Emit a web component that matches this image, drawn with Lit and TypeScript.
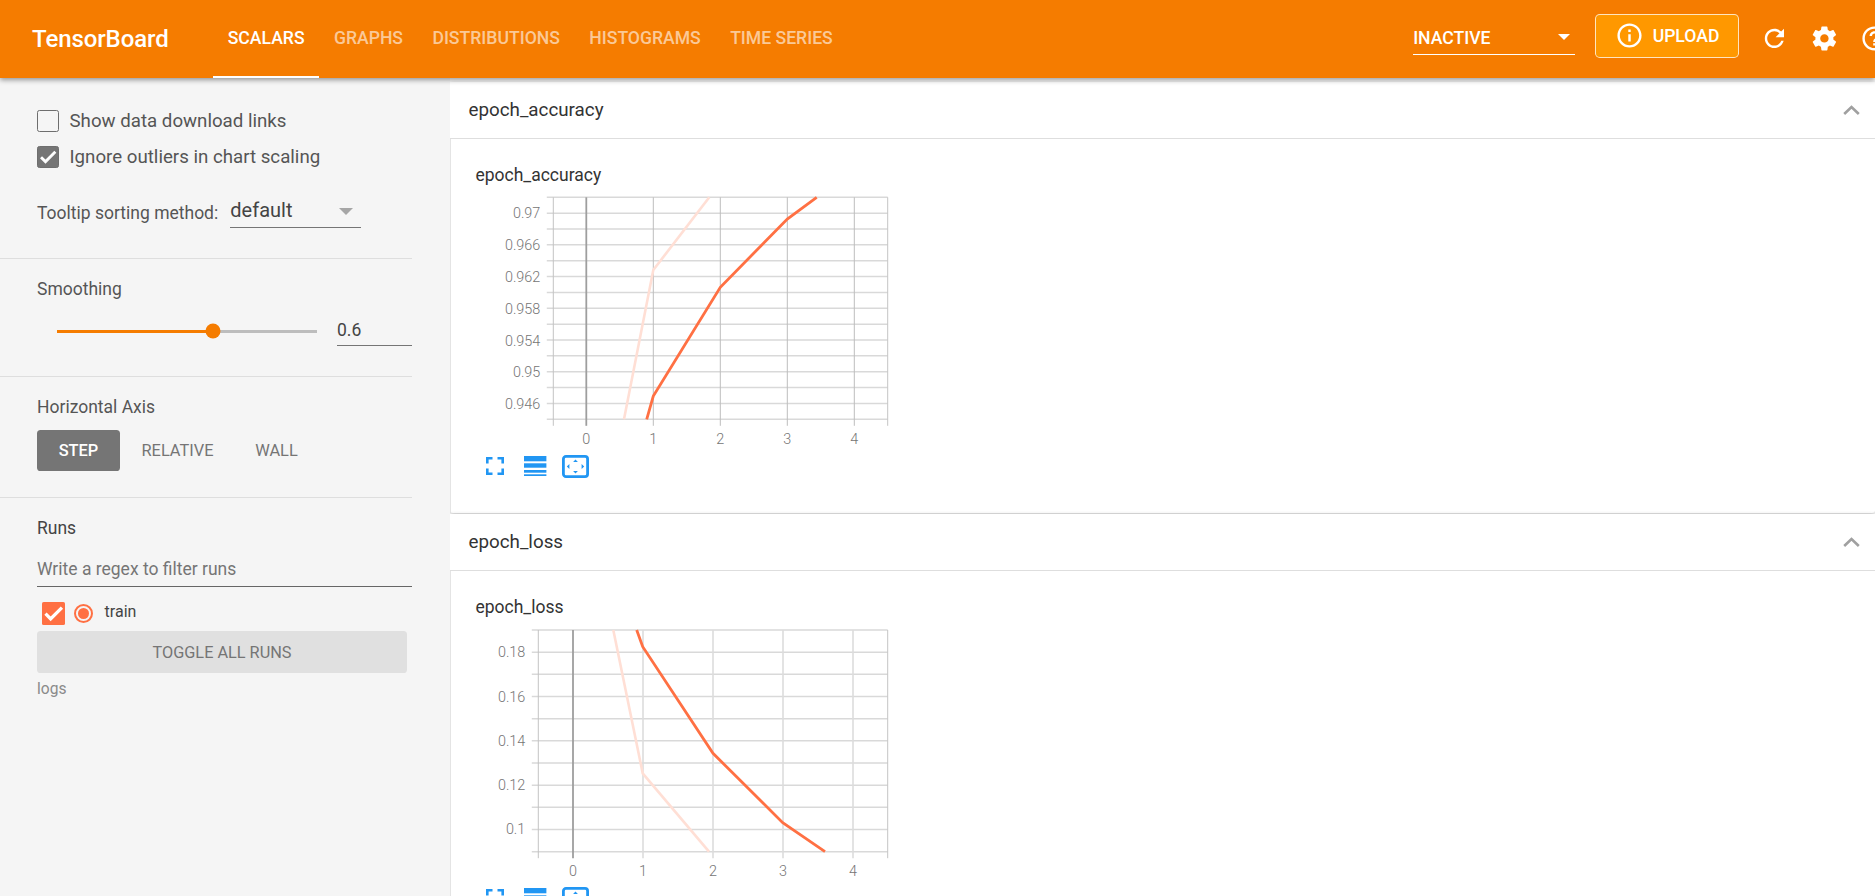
import { LitElement, html, css, svg } from "lit";
import { customElement, property } from "lit/decorators.js";

const PATHS = {
  refresh: "M17.65 6.35C16.2 4.9 14.21 4 12 4c-4.42 0-7.99 3.58-7.99 8s3.57 8 7.99 8c3.73 0 6.84-2.55 7.73-6h-2.08c-.82 2.33-3.04 4-5.65 4-3.31 0-6-2.69-6-6s2.69-6 6-6c1.66 0 3.14.69 4.22 1.78L13 11h7V4l-2.35 2.35z",
  settings: "M19.43 12.98c.04-.32.07-.64.07-.98s-.03-.66-.07-.98l2.11-1.65c.19-.15.24-.42.12-.64l-2-3.46c-.12-.22-.39-.3-.61-.22l-2.49 1c-.52-.4-1.08-.73-1.69-.98l-.38-2.65C14.46 2.18 14.25 2 14 2h-4c-.25 0-.46.18-.49.42l-.38 2.65c-.61.25-1.17.59-1.69.98l-2.49-1c-.23-.09-.49 0-.61.22l-2 3.46c-.13.22-.07.49.12.64l2.11 1.65c-.04.32-.07.65-.07.98s.03.66.07.98l-2.11 1.65c-.19.15-.24.42-.12.64l2 3.46c.12.22.39.3.61.22l2.49-1c.52.4 1.08.73 1.69.98l.38 2.65c.03.24.24.42.49.42h4c.25 0 .46-.18.49-.42l.38-2.65c.61-.25 1.17-.59 1.69-.98l2.49 1c.23.09.49 0 .61-.22l2-3.46c.12-.22.07-.49-.12-.64l-2.11-1.65zM12 15.5c-1.93 0-3.5-1.57-3.5-3.5s1.57-3.5 3.5-3.5 3.5 1.57 3.5 3.5-1.57 3.5-3.5 3.5z",
  help: "M11 18h2v-2h-2v2zm1-16C6.48 2 2 6.48 2 12s4.48 10 10 10 10-4.48 10-10S17.52 2 12 2zm0 18c-4.41 0-8-3.59-8-8s3.59-8 8-8 8 3.59 8 8-3.59 8-8 8zm0-14c-2.21 0-4 1.79-4 4h2c0-1.1.9-2 2-2s2 .9 2 2c0 2-3 1.75-3 5h2c0-2.25 3-2.5 3-5 0-2.21-1.79-4-4-4z",
  info: "M11 17h2v-6h-2v6zm1-15C6.48 2 2 6.48 2 12s4.48 10 10 10 10-4.48 10-10S17.52 2 12 2zm0 18c-4.41 0-8-3.59-8-8s3.59-8 8-8 8 3.59 8 8-3.59 8-8 8zM11 9h2V7h-2v2z",
  check: "M9 16.17L4.83 12l-1.41 1.41L9 19 21 7l-1.41-1.41z",
};

const icon = (name: keyof typeof PATHS, cls = "") =>
  html`<svg class=${cls} viewBox="0 0 24 24" fill="currentColor"><path d=${PATHS[name]}></path></svg>`;

interface ChartCfg {
  title: string;
  left: number; right: number; top: number; bottom: number;
  xZero: number; xStep: number;
  yLines: number[];
  yLabels: [string, number][];
  vColor: string; vWidth: number;
  dark: [number, number][];
  pale: [number, number][];
}

// Coordinates are local to the chart svg, whose origin lies at the chart title's left edge.
const ACCURACY: ChartCfg = {
  title: "epoch_accuracy",
  left: 77.3, right: 411.7, top: 7.3, bottom: 229.3,
  xZero: 110.3, xStep: 67,
  yLines: Array.from({ length: 15 }, (_, i) => 7.3 + i * (222 / 14)),
  yLabels: [["0.97", 22.7], ["0.966", 54.7], ["0.962", 86.7], ["0.958", 118.5], ["0.954", 150.5], ["0.95", 182.2], ["0.946", 214]],
  vColor: "#bdbdbd", vWidth: 1,
  dark: [[170.7, 229.3], [177.3, 206], [244.3, 97.3], [311.3, 29], [340.7, 7.3]],
  pale: [[148, 229.3], [177.3, 80], [233.3, 7.3]],
};
const LOSS: ChartCfg = {
  title: "epoch_loss",
  left: 62.3, right: 411.7, top: 8, bottom: 229.7,
  xZero: 97, xStep: 70,
  yLines: Array.from({ length: 11 }, (_, i) => 8 + i * 22.17),
  yLabels: [["0.18", 30], ["0.16", 74.6], ["0.14", 118.7], ["0.12", 163.3], ["0.1", 207.3]],
  vColor: "#dcdcdc", vWidth: 1.6,
  dark: [[160.7, 8], [166.7, 24.7], [237, 131.3], [306.7, 200.7], [349, 229.7]],
  pale: [[137.3, 8], [166.7, 151.3], [233, 229.7]],
};

@customElement("scalar-chart")
class ScalarChart extends LitElement {
  @property({ attribute: false }) cfg!: ChartCfg;

  static styles = css`
    :host { display: block; }
    .name { font: 400 17.5px/20px Roboto, sans-serif; color: #333; height: 20px; margin-bottom: 5px; }
    svg.plot { display: block; margin-left: 1px; }
    .plot text { font: 300 14.4px Roboto, sans-serif; fill: #757575; }
    .tools { display: flex; align-items: center; height: 24px; padding-left: 11px; margin-top: -1px; }
    .tools svg { display: block; flex: none; }
    .fs { margin-right: 20px; }
    .ls { margin-right: 15px; }
  `;

  render() {
    const c = this.cfg;
    const ticks = [0, 1, 2, 3, 4];
    return html`
      <div class="name">${c.title}</div>
      <svg class="plot" width="420" height="265" viewBox="0 0 420 265">
        ${c.yLines.map((y) => svg`<line x1=${c.left - 6.5} x2=${c.right} y1=${y} y2=${y} stroke="#d9d9d9" stroke-width="1.5"></line>`)}
        ${[c.left, c.right].map((x) => svg`<line x1=${x} x2=${x} y1=${c.top} y2=${c.bottom + 6.5} stroke="#c4c4c4" stroke-width="1"></line>`)}
        ${ticks.map((t) => {
          const x = c.xZero + t * c.xStep;
          return svg`<line x1=${x} x2=${x} y1=${c.top} y2=${c.bottom + 6.5}
            stroke=${t === 0 ? "#9e9e9e" : c.vColor} stroke-width=${t === 0 ? 1.8 : c.vWidth}></line>
            <text x=${x} y=${c.bottom + 24.5} text-anchor="middle">${t}</text>`;
        })}
        ${c.yLabels.map(([s, y]) => svg`<text x=${c.left - 13} y=${y + 5} text-anchor="end">${s}</text>`)}
        <polyline points=${c.pale.map((p) => p.join(",")).join(" ")} fill="none" stroke="#ffdfd5" stroke-width="2.6"></polyline>
        <polyline points=${c.dark.map((p) => p.join(",")).join(" ")} fill="none" stroke="#ff7043" stroke-width="2.8"></polyline>
      </svg>
      <div class="tools">
        <svg class="fs" width="18" height="18" viewBox="0 0 18 18" fill="none" stroke="#2196f3" stroke-width="2.6">
          <path d="M1.3 6.5V1.3H6.5M11.5 1.3H16.7V6.5M16.7 11.5V16.7H11.5M6.5 16.7H1.3V11.5"></path>
        </svg>
        <svg class="ls" width="22.4" height="20" viewBox="0 0 22.4 20" fill="#2196f3">
          <rect width="22.4" height="5.3"></rect>
          <rect y="7.3" width="22.4" height="4.4"></rect>
          <rect y="14" width="22.4" height="2.7"></rect>
          <rect y="18.3" width="22.4" height="1.7"></rect>
        </svg>
        <svg width="27" height="23" viewBox="0 0 27 23">
          <rect x="1.4" y="1.4" width="24.2" height="20.2" rx="2.6" fill="none" stroke="#2196f3" stroke-width="2.8"></rect>
          <path fill="#2196f3" d="M13.5 4.4l2.4 2.6h-4.8zM13.5 18.6l2.4-2.6h-4.8zM4.8 11.5l2.6-2.4v4.8zM22.2 11.5l-2.6-2.4v4.8z"></path>
        </svg>
      </div>
    `;
  }
}

@customElement("app-root")
class AppRoot extends LitElement {
  static styles = css`
    :host {
      display: block; width: 100%; height: 100vh; overflow: hidden;
      font-family: Roboto, "Liberation Sans", sans-serif; background: #fff;
    }
    .bar {
      position: relative; z-index: 2; display: flex; align-items: flex-start;
      height: 78px; background: #f57c00; color: #fff; overflow: hidden;
      padding-left: 32px; box-sizing: border-box;
    }
    .shadow { position: relative; z-index: 2; box-shadow: 0 2px 5px rgba(0, 0, 0, 0.4); }
    .brand { font-size: 24px; font-weight: 500; line-height: 78px; letter-spacing: -0.1px; width: 181px; flex: none; }
    .tab {
      height: 78px; box-sizing: border-box; padding: 0 14.7px; display: flex; align-items: center;
      font-size: 17.6px; font-weight: 500; color: rgba(255, 255, 255, 0.6);
      border-bottom: 2px solid transparent; flex: none;
    }
    .tab.on { color: #fff; border-bottom-color: #fff; }
    .right { margin-left: auto; margin-right: -13.4px; display: flex; align-items: flex-start; flex: none; }
    .sel {
      width: 162px; height: 31px; margin-top: 23px; box-sizing: content-box;
      display: flex; align-items: center; justify-content: space-between;
      font-size: 17.6px; font-weight: 500; border-bottom: 1.2px solid #fff;
      padding-bottom: 0;
    }
    .sel span { position: relative; top: -1px; }
    .sel i { width: 0; height: 0; border: 6px solid transparent; border-top: 6.5px solid #fff; border-bottom: 0; margin-right: 5px; position: relative; top: -2px; }
    .upload {
      margin-left: 20px; width: 143.4px; height: 43.7px; box-sizing: border-box;
      margin-top: 14px; background: #ff9800; border: 1px solid rgba(255, 255, 255, 0.75); border-radius: 4.8px;
      display: flex; align-items: center; padding-left: 19px; font-size: 17.6px; font-weight: 500;
    }
    .upload svg { width: 29px; height: 29px; margin-right: 8.5px; }
    .ib { width: 28.8px; height: 28.8px; margin-left: 20.8px; margin-top: 23.6px; flex: none; display: block; }
    .ib.first { margin-left: 21.9px; }

    .body { display: flex; height: calc(100vh - 78px); }
    .side { width: 450px; flex: none; background: #f5f5f5; color: #555; font-size: 17.5px; box-sizing: border-box; padding-right: 38px; }
    .sec { border-bottom: 1.2px solid #dedede; padding-left: 37px; box-sizing: border-box; }
    .s1 { height: 181px; padding-top: 31px; }
    .s2 { height: 118px; padding-top: 19.5px; }
    .s3 { height: 121px; padding-top: 20px; }
    .s4 { border-bottom: 0; padding-top: 19.5px; }
    .label { line-height: 20px; height: 20px; }
    .chk { display: flex; align-items: center; height: 23px; margin-bottom: 13px; font-size: 18.7px; }
    .box {
      width: 22px; height: 22px; box-sizing: border-box; border: 1.8px solid #6e6e6e; border-radius: 2.4px;
      margin-right: 10.5px; flex: none; color: #fff; display: block;
    }
    .box.on { background: #757575; }
    .box svg { display: block; width: 100%; height: 100%; stroke: currentColor; stroke-width: 1.4; }
    .tip { display: flex; align-items: flex-start; margin-top: 26.5px; }
    .tip .t { line-height: 20px; margin-top: 8px; width: 193.3px; flex: none; }
    .dd {
      width: 131px; height: 33px; box-sizing: border-box; border-bottom: 1.2px solid #757575;
      display: flex; justify-content: space-between; align-items: flex-start; font-size: 20px; color: #444; padding-top: 4.5px; line-height: 22px;
    }
    .dd i { width: 0; height: 0; border: 7px solid transparent; border-top: 7px solid #a6a6a6; border-bottom: 0; margin: 9px 8.5px 0 0; }
    .slide { display: flex; align-items: center; margin-top: 20.5px; height: 24px; padding-left: 20px; }
    .track { position: relative; width: 260px; height: 3px; background: #bdbdbd; flex: none; }
    .fill { height: 100%; background: #f57c00; width: 60%; }
    .thumb { position: absolute; left: 60%; top: 50%; width: 15px; height: 15px; border-radius: 50%; background: #f57c00; transform: translate(-50%, -50%); }
    .val {
      margin-left: 20px; flex: 1; height: 30px; line-height: 28px; box-sizing: border-box;
      border-bottom: 1.2px solid #757575; color: #444;
    }
    .tog { display: flex; margin-top: 13px; font-size: 16.4px; }
    .tog div { display: flex; align-items: center; justify-content: center; height: 41px; color: #757575; }
    .tog .on { width: 83px; background: #757575; color: #fff; font-weight: 500; border-radius: 3.6px; }
    .tog .r { width: 115px; }
    .tog .w { width: 83px; }
    .runs { color: #444; }
    .rx {
      margin-top: 20px; height: 29px; line-height: 22px; color: #757575; box-sizing: border-box;
      border-bottom: 1.2px solid #666;
    }
    .run { display: flex; align-items: center; height: 23px; margin: 15.5px 0 0 5px; }
    .run .c { width: 23px; height: 23px; background: #ff7043; border-radius: 1.6px; color: #fff; flex: none; }
    .run .c svg { display: block; width: 100%; height: 100%; stroke: currentColor; stroke-width: 1.4; }
    .radio {
      width: 19.4px; height: 19.4px; box-sizing: border-box; border: 2px solid #ff7043; border-radius: 50%;
      margin-left: 8.7px; flex: none; display: flex; align-items: center; justify-content: center;
    }
    .radio::after { content: ""; width: 11px; height: 11px; border-radius: 50%; background: #ff7043; }
    .run span { margin-left: 11.5px; font-size: 16px; color: #444; position: relative; top: -2px; }
    .all {
      width: 370px; height: 42px; margin-top: 6px; background: #e0e0e0; border-radius: 3.6px;
      display: flex; align-items: center; justify-content: center; color: #757575; font-size: 16.3px;
    }
    .logs { margin-top: 6px; line-height: 20px; font-size: 15.6px; color: #8a8a8a; }

    .main { flex: 1; min-width: 0; display: flex; flex-direction: column; overflow: hidden; padding-top: 4px; }
    .pane { flex: none; background: #fff; box-shadow: 0 1px 4px rgba(0, 0, 0, 0.22); margin-bottom: 1px; border-radius: 0 0 3px 3px; }
    .head {
      height: 57px; box-sizing: border-box; border-bottom: 1.2px solid #dedede; display: flex; align-items: center;
      justify-content: space-between; padding: 0 15px 0 18.5px; font-size: 18.8px; color: #333;
    }
    .head svg { width: 17px; height: 10px; display: block; }
    .content { border-left: 1.6px solid #e4e4e4; padding: 26px 0 0 24.4px; height: 374px; box-sizing: border-box; }
  `;

  render() {
    const tabs = ["SCALARS", "GRAPHS", "DISTRIBUTIONS", "HISTOGRAMS", "TIME SERIES"];
    const pane = (cfg: ChartCfg) => html`
      <section class="pane">
        <div class="head">
          <span>${cfg.title}</span>
          <svg viewBox="0 0 17 10" fill="none" stroke="#a0a0a0" stroke-width="2.6"><path d="M1.2 9L8.5 2L15.8 9"></path></svg>
        </div>
        <div class="content"><scalar-chart .cfg=${cfg}></scalar-chart></div>
      </section>`;
    return html`
      <div class="shadow">
        <header class="bar">
          <div class="brand">TensorBoard</div>
          ${tabs.map((t, i) => html`<div class="tab ${i === 0 ? "on" : ""}">${t}</div>`)}
          <div class="right">
            <div class="sel"><span>INACTIVE</span><i></i></div>
            <div class="upload">${icon("info")}UPLOAD</div>
            ${icon("refresh", "ib first")}${icon("settings", "ib")}${icon("help", "ib")}
          </div>
        </header>
      </div>
      <div class="body">
        <aside class="side">
          <div class="sec s1">
            <div class="chk"><div class="box"></div>Show data download links</div>
            <div class="chk"><div class="box on">${icon("check")}</div>Ignore outliers in chart scaling</div>
            <div class="tip"><div class="t">Tooltip sorting method:</div><div class="dd">default<i></i></div></div>
          </div>
          <div class="sec s2">
            <div class="label">Smoothing</div>
            <div class="slide">
              <div class="track"><div class="fill"></div><div class="thumb"></div></div>
              <div class="val">0.6</div>
            </div>
          </div>
          <div class="sec s3">
            <div class="label">Horizontal Axis</div>
            <div class="tog"><div class="on">STEP</div><div class="r">RELATIVE</div><div class="w">WALL</div></div>
          </div>
          <div class="sec s4">
            <div class="label runs">Runs</div>
            <div class="rx">Write a regex to filter runs</div>
            <div class="run"><div class="c">${icon("check")}</div><div class="radio"></div><span>train</span></div>
            <div class="all">TOGGLE ALL RUNS</div>
            <div class="logs">logs</div>
          </div>
        </aside>
        <main class="main">
          ${pane(ACCURACY)}
          ${pane(LOSS)}
        </main>
      </div>
    `;
  }
}
